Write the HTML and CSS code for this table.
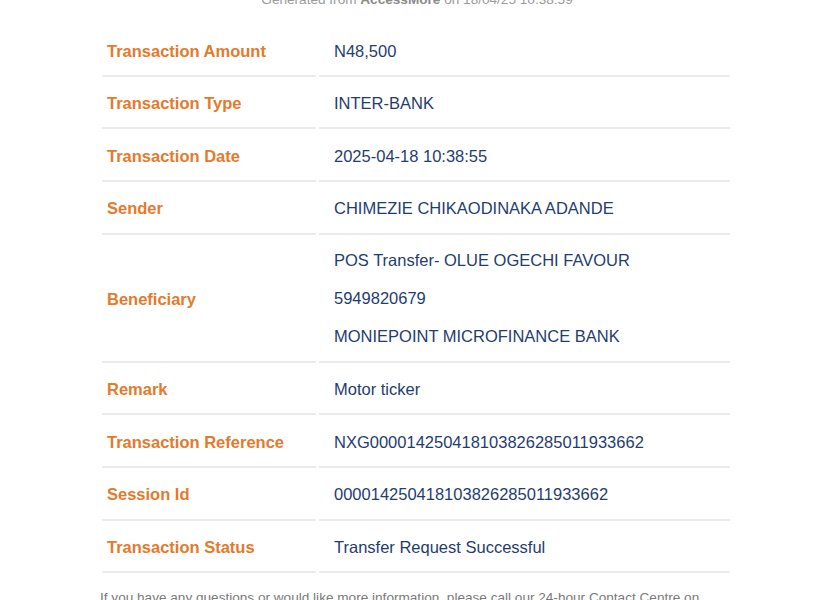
FILE: index.html
```html
<!DOCTYPE html>
<html>
<head>
<meta charset="utf-8">
<link rel="stylesheet" href="styles.css">
</head>
<body>
<div class="receipt">
  <p class="generated">Generated from <b>AccessMore</b> on 18/04/25 10:38:59</p>
  <table class="details">
    <tr><td class="label">Transaction Amount</td><td class="value">N48,500</td></tr>
    <tr><td class="label">Transaction Type</td><td class="value">INTER-BANK</td></tr>
    <tr><td class="label">Transaction Date</td><td class="value">2025-04-18 10:38:55</td></tr>
    <tr><td class="label">Sender</td><td class="value">CHIMEZIE CHIKAODINAKA ADANDE</td></tr>
    <tr><td class="label">Beneficiary</td><td class="value multi">
      <div class="line">POS Transfer- OLUE OGECHI FAVOUR</div>
      <div class="line">5949820679</div>
      <div class="line">MONIEPOINT MICROFINANCE BANK</div>
    </td></tr>
    <tr><td class="label">Remark</td><td class="value">Motor ticker</td></tr>
    <tr><td class="label">Transaction Reference</td><td class="value">NXG000014250418103826285011933662</td></tr>
    <tr><td class="label">Session Id</td><td class="value">000014250418103826285011933662</td></tr>
    <tr><td class="label">Transaction Status</td><td class="value">Transfer Request Successful</td></tr>
  </table>
  <p class="note">If you have any questions or would like more information, please call our 24-hour Contact Centre on</p>
</div>
</body>
</html>
```
FILE: styles.css
```css
html, body {
  margin: 0;
  padding: 0;
  background: #ffffff;
}
body {
  font-family: "Liberation Sans", Arial, sans-serif;
}
.receipt {
  width: 634px;
  margin: -10px auto 0;
}
.generated {
  margin: 0 0 14px;
  text-align: center;
  font-size: 13.6px;
  line-height: 20px;
  color: #9a9a9a;
}
.generated b {
  color: #8a8a8a;
}
.details {
  width: 634px;
  border-collapse: separate;
  border-spacing: 3px 0;
  margin: 0 -1px;
}
.details td {
  border-bottom: 2px solid #ebebeb;
  padding: 16.5px 0 14.17px;
  line-height: 20px;
  font-size: 16.5px;
  vertical-align: middle;
}
.details td.label {
  width: 209px;
  padding-left: 5px;
  font-weight: bold;
  color: #e47a2c;
}
.details td.value {
  padding-left: 15px;
  color: #1f3d70;
}
.details td.multi {
  padding-top: 6px;
  padding-bottom: 6px;
}
.line {
  line-height: 38px;
}
.note {
  margin: 16px 0 0 0;
  font-size: 13.6px;
  line-height: 18px;
  color: #7a7a7a;
}
```
